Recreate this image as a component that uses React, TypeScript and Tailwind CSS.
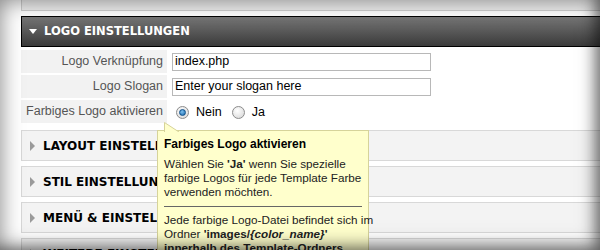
import React from "react";

const sans = { fontFamily: '"Liberation Sans", Arial, sans-serif' };
const wide = { fontFamily: '"DejaVu Sans", Verdana, sans-serif' };

function Radio({ checked }: { checked?: boolean }) {
  return (
    <span className="flex h-[13px] w-[13px] items-center justify-center rounded-full border border-[#8c8c8c] bg-[radial-gradient(circle_at_40%_35%,#ffffff,#d4d4d4)]">
      {checked && (
        <span className="h-[7px] w-[7px] rounded-full border border-[#0d4f8a] bg-[radial-gradient(circle_at_40%_35%,#7cc0f0,#1665a8)]" />
      )}
    </span>
  );
}

function Row({ label, children }: { label: string; children: React.ReactNode }) {
  return (
    <div className="flex h-[23px] items-stretch">
      <div className="flex w-[146px] shrink-0 items-center justify-end bg-[#f2f2f2] pr-[4px] text-[12.5px] text-[#555]">
        {label}
      </div>
      <div className="flex flex-1 items-center pl-[5px]">{children}</div>
    </div>
  );
}

function Section({ title }: { title: string }) {
  return (
    <div className="flex h-[31px] items-center border border-r-0 border-[#d8d8d8] bg-[#f3f3f3] pl-[8px]">
      <span className="mr-[8px] h-0 w-0 border-y-[5px] border-l-[5px] border-y-transparent border-l-[#9a9a9a]" />
      <span style={wide} className="whitespace-nowrap text-[12px] font-bold text-black">
        {title}
      </span>
    </div>
  );
}

export default function App() {
  return (
    <div style={sans} className="relative h-[250px] w-[600px] overflow-hidden bg-white">
      <div className="pl-[21px]">
        <div className="h-[11px] border-b border-l border-[#cfcfcf] bg-[#efefef]" />
        <div className="mt-[5px] flex h-[31px] items-center border border-r-0 border-black bg-gradient-to-b from-[#767676] to-[#3b3b3b] pl-[7px]">
          <span className="mr-[7px] h-0 w-0 border-x-[4px] border-t-[5px] border-x-transparent border-t-white" />
          <span style={wide} className="text-[11.5px] font-bold text-white">
            LOGO EINSTELLUNGEN
          </span>
        </div>

        <div className="mt-[3px] flex flex-col gap-[2px]">
          <Row label="Logo Verknüpfung">
            <div className="flex h-[18px] w-[259px] items-center border border-[#b8b8b8] px-[2px] text-[12.5px] text-black">
              index.php
            </div>
          </Row>
          <Row label="Logo Slogan">
            <div className="flex h-[18px] w-[259px] items-center border border-[#b8b8b8] px-[2px] text-[12.5px] text-black">
              Enter your slogan here
            </div>
          </Row>
          <Row label="Farbiges Logo aktivieren">
            <div className="flex items-center pl-[4px] pt-[2px] text-[12.5px] text-black">
              <Radio checked />
              <span className="ml-[7px] mr-[10px]">Nein</span>
              <Radio />
              <span className="ml-[7px]">Ja</span>
            </div>
          </Row>
        </div>

        <div className="mt-[7px] flex flex-col gap-[5px]">
          <Section title="LAYOUT EINSTELLUNGEN" />
          <Section title="STIL EINSTELLUNGEN" />
          <Section title="MENÜ & EINSTELLUNGEN" />
          <Section title="WEITERE EINSTELLUNGEN" />
        </div>
      </div>

      {/* tooltip */}
      <div className="absolute left-[157px] top-[130px] w-[212px] whitespace-nowrap border border-[#d6d39a] bg-[#ffffcc] px-[6px] pb-4 pt-[6px] text-[11.7px] leading-[14px] text-[#222]">
        <svg className="absolute -top-[9px] left-[6px]" width="16" height="10" viewBox="0 0 16 10">
          <path d="M0.5 10 L0.5 0.5 L15 10" fill="#ffffcc" stroke="#d6d39a" />
        </svg>
        <div className="mb-[6px] text-[12px] font-bold text-black">Farbiges Logo aktivieren</div>
        <p>
          Wählen Sie <b>'Ja'</b> wenn Sie spezielle
          <br />
          farbige Logos für jede Template Farbe
          <br />
          verwenden möchten.
        </p>
        <div className="mb-[6px] mt-[7px] border-t border-[#666]" />
        <p>
          Jede farbige Logo-Datei befindet sich im
          <br />
          Ordner{" "}
          <b>
            'images/<i>{"{color_name}"}</i>'
          </b>
          <br />
          <b>innerhalb des Template-Ordners</b>
        </p>
      </div>

      {/* vignette */}
      <div className="pointer-events-none absolute inset-0 shadow-[inset_0_0_22px_rgba(0,0,0,0.5),inset_-10px_-8px_14px_-6px_rgba(0,0,0,0.35)]" />
    </div>
  );
}
